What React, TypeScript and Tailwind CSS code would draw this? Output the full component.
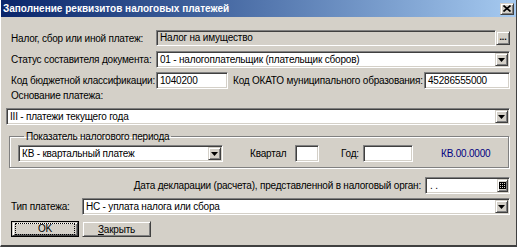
import React from 'react'

const sunken =
    'border border-t-[#808080] border-l-[#808080] border-b-white border-r-white shadow-[inset_1px_1px_0_#404040,inset_-1px_-1px_0_#d4d0c8]'
const raised =
    'border border-t-[#d4d0c8] border-l-[#d4d0c8] border-b-[#404040] border-r-[#404040] shadow-[inset_1px_1px_0_#fff,inset_-1px_-1px_0_#808080]'

const Arrow = () => (
    <svg width="7" height="4" viewBox="0 0 7 4">
        <path d="M0 0h7L3.5 4z" fill="#000" />
    </svg>
)

const Combo = ({ text, className = '' }: { text: string; className?: string }) => (
    <div className={`flex h-[17px] items-stretch bg-white ${sunken} ${className}`}>
        <div className="flex-1 truncate pl-[3px] leading-[15px]">{text}</div>
        <div className={`flex w-[13px] items-center justify-center bg-[#d4d0c8] my-[1px] mr-[1px] ${raised}`}>
            <Arrow />
        </div>
    </div>
)

const Field = ({ text = '', className = '' }: { text?: string; className?: string }) => (
    <div className={`h-[17px] bg-white pl-[3px] leading-[15px] ${sunken} ${className}`}>{text}</div>
)

export default function App() {
    return (
        <div
            className="flex h-[247px] w-[517px] flex-col overflow-hidden whitespace-nowrap bg-[#d4d0c8] text-[10px] text-black border-l border-l-white border-r border-r-[#404040] border-b-2 border-b-[#404040]"
            style={{ fontFamily: '"Liberation Sans", Arial, sans-serif' }}
        >
            {/* title bar */}
            <div className="flex h-[17px] shrink-0 items-center justify-between bg-gradient-to-r from-[#0a246a] to-[#a6caf0] pl-[2px] pr-[2px]">
                <span className="text-[10px] font-bold text-white">Заполнение реквизитов налоговых платежей</span>
                <button className={`flex h-[12px] w-[14px] items-center justify-center bg-[#d4d0c8] ${raised}`}>
                    <svg width="8" height="7" viewBox="0 0 8 7">
                        <path d="M0.5 0.5l7 6M7.5 0.5l-7 6" stroke="#000" strokeWidth="1.6" />
                    </svg>
                </button>
            </div>

            <div className="flex flex-1 flex-col pl-[5px] pr-[6px] pt-[13px] tracking-[-0.2px]">
                <div className="flex h-[16px] items-center">
                    <div className="w-[150px] pl-[5px]">Налог, сбор или иной платеж:</div>
                    <div className={`h-[16px] flex-1 truncate pl-[3px] leading-[14px] ${sunken}`}>Налог на имущество</div>
                    <button className={`flex h-[14px] w-[14px] items-end justify-center bg-[#d4d0c8] pb-[2px] text-[9px] font-bold leading-none ${raised}`}>
                        ...
                    </button>
                </div>

                <div className="mt-[5px] flex items-center">
                    <div className="w-[150px] pl-[5px]">Статус составителя документа:</div>
                    <Combo text="01 - налогоплательщик (плательщик сборов)" className="flex-1" />
                </div>

                <div className="mt-[4px] flex items-center">
                    <div className="w-[150px] pl-[5px]">Код бюджетной классификации:</div>
                    <Field text="1040200" className="w-[72px]" />
                    <div className="ml-[5px] flex-1">Код ОКАТО муниципального образования:</div>
                    <Field text="45286555000" className="w-[86px]" />
                </div>

                <div className="mt-[1px] pl-[5px] leading-[12px]">Основание платежа:</div>
                <Combo text="III - платежи текущего года" className="mt-[6px]" />

                <fieldset className="ml-[3px] mr-[1px] mt-[5px] border border-[#808080] pb-[5px] pl-[8px] shadow-[1px_1px_0_#fff,inset_1px_1px_0_#fff]">
                    <legend className="ml-[6px] px-[2px] leading-[13px]">Показатель налогового периода</legend>
                    <div className="mt-[2px] flex items-center">
                        <Combo text="КВ - квартальный платеж" className="w-[205px]" />
                        <div className="ml-[27px] w-[45px]">Квартал</div>
                        <Field className="w-[24px]" />
                        <div className="ml-[22px] w-[22px]">Год:</div>
                        <Field className="w-[50px]" />
                        <div className="ml-[28px] text-[#000080]">КВ.00.0000</div>
                    </div>
                </fieldset>

                <div className="mt-[9px] flex items-center justify-end">
                    <div>Дата декларации (расчета), представленной в налоговый орган:</div>
                    <div className={`ml-[4px] flex h-[17px] w-[85px] items-stretch bg-white ${sunken}`}>
                        <div className="flex-1 pl-[4px] leading-[15px]">. .</div>
                        <div className={`my-[1px] mr-[1px] flex w-[11px] items-center justify-center bg-[#d4d0c8] ${raised}`}>
                            <svg width="7" height="7" viewBox="0 0 7 7">
                                <path d="M0 .5h7M0 2.5h7M0 4.5h7M0 6.5h7M.5 0v7M2.5 0v7M4.5 0v7M6.5 0v7" stroke="#000" strokeWidth="1" />
                            </svg>
                        </div>
                    </div>
                </div>

                <div className="mt-[4px] flex items-center">
                    <div className="w-[76px] pl-[5px]">Тип платежа:</div>
                    <Combo text="НС - уплата налога или сбора" className="flex-1" />
                </div>

                <div className="mt-[6px] flex">
                    <button className="ml-[5px] h-[16px] w-[68px] border border-black bg-[#d4d0c8] p-0">
                        <div className={`flex h-full w-full items-stretch px-[2px] py-0 ${raised}`}>
                            <span className="flex flex-1 items-center justify-center border border-dotted border-black text-[10px] leading-[10px]">OK</span>
                        </div>
                    </button>
                    <button className={`ml-[3px] flex h-[16px] w-[69px] items-center justify-center bg-[#d4d0c8] ${raised}`}>
                        <span>
                            <u>З</u>акрыть
                        </span>
                    </button>
                </div>
            </div>
        </div>
    )
}
